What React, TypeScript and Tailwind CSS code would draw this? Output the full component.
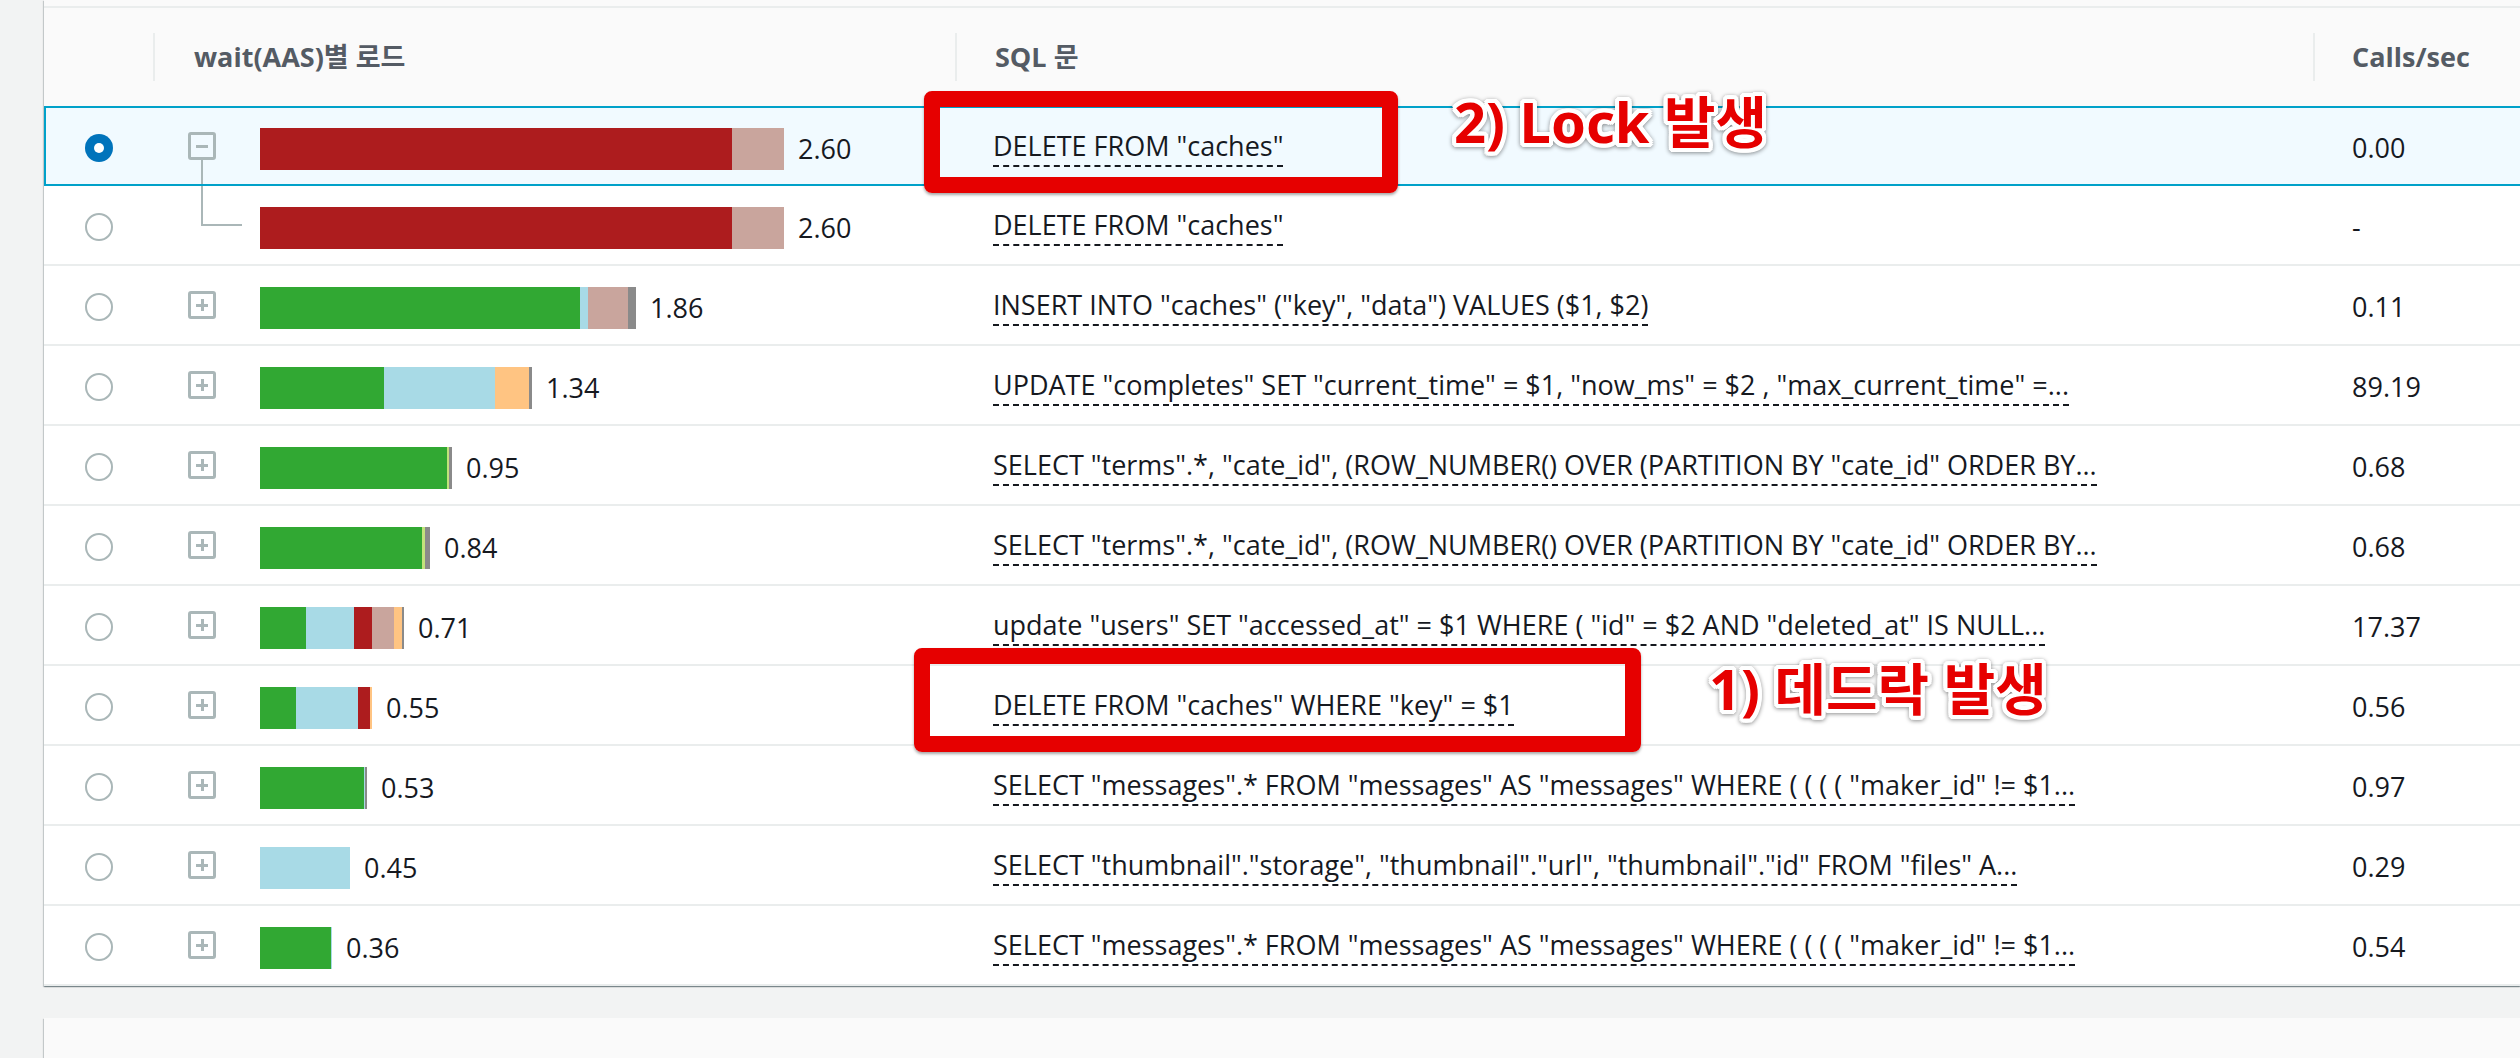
import React from "react";

const RED = "#ad1c1e";
const BROWN = "#c9a59d";
const GREEN = "#31a833";
const LBLUE = "#a8dae6";
const ORANGE = "#ffc482";
const GRAY = "#8a8a8a";
const YGREEN = "#c2e27c";

type Row = {
  sel?: boolean;
  tree: "minus" | "child" | "plus";
  segs: [number, string][];
  val: string;
  sql: string;
  calls: string;
};

const rows: Row[] = [
  { sel: true, tree: "minus", segs: [[472, RED], [52, BROWN]], val: "2.60", sql: 'DELETE FROM "caches"', calls: "0.00" },
  { tree: "child", segs: [[472, RED], [52, BROWN]], val: "2.60", sql: 'DELETE FROM "caches"', calls: "-" },
  { tree: "plus", segs: [[320, GREEN], [8, LBLUE], [40, BROWN], [8, GRAY]], val: "1.86", sql: 'INSERT INTO "caches" ("key", "data") VALUES ($1, $2)', calls: "0.11" },
  { tree: "plus", segs: [[124, GREEN], [111, LBLUE], [34, ORANGE], [3, GRAY]], val: "1.34", sql: 'UPDATE "completes" SET "current_time" = $1, "now_ms" = $2 , "max_current_time" =...', calls: "89.19" },
  { tree: "plus", segs: [[187, GREEN], [2, YGREEN], [3, GRAY]], val: "0.95", sql: 'SELECT "terms".*, "cate_id", (ROW_NUMBER() OVER (PARTITION BY "cate_id" ORDER BY...', calls: "0.68" },
  { tree: "plus", segs: [[162, GREEN], [3, YGREEN], [5, GRAY]], val: "0.84", sql: 'SELECT "terms".*, "cate_id", (ROW_NUMBER() OVER (PARTITION BY "cate_id" ORDER BY...', calls: "0.68" },
  { tree: "plus", segs: [[46, GREEN], [48, LBLUE], [18, RED], [22, BROWN], [8, ORANGE], [2, GRAY]], val: "0.71", sql: 'update "users" SET "accessed_at" = $1 WHERE ( "id" = $2 AND "deleted_at" IS NULL...', calls: "17.37" },
  { tree: "plus", segs: [[36, GREEN], [62, LBLUE], [12, RED], [2, ORANGE]], val: "0.55", sql: 'DELETE FROM "caches" WHERE "key" = $1', calls: "0.56" },
  { tree: "plus", segs: [[104, GREEN], [1, LBLUE], [2, GRAY]], val: "0.53", sql: 'SELECT "messages".* FROM "messages" AS "messages" WHERE ( ( ( ( "maker_id" != $1...', calls: "0.97" },
  { tree: "plus", segs: [[90, LBLUE]], val: "0.45", sql: 'SELECT "thumbnail"."storage", "thumbnail"."url", "thumbnail"."id" FROM "files" A...', calls: "0.29" },
  { tree: "plus", segs: [[71, GREEN], [1, LBLUE]], val: "0.36", sql: 'SELECT "messages".* FROM "messages" AS "messages" WHERE ( ( ( ( "maker_id" != $1...', calls: "0.54" },
];

function Radio({ selected }: { selected?: boolean }) {
  if (selected) {
    return (
      <span className="flex h-[28px] w-[28px] items-center justify-center rounded-full bg-[#0073bb]">
        <span className="h-[10px] w-[10px] rounded-full bg-white" />
      </span>
    );
  }
  return <span className="block h-[28px] w-[28px] rounded-full border-2 border-[#aab7b8] bg-white" />;
}

function ExpandSlot({ tree }: { tree: Row["tree"] }) {
  if (tree === "child") {
    return (
      <div className="relative h-[28px] w-[28px] shrink-0">
        <div className="absolute left-[13px] top-[-25px] h-[40px] w-[41px] border-b-2 border-l-2 border-[#aab7b8]" />
      </div>
    );
  }
  return (
    <div className="relative h-[28px] w-[28px] shrink-0">
      <div className="relative flex h-[28px] w-[28px] items-center justify-center rounded-[3px] border-[3px] border-[#aab7b8]">
        <span className="h-[3px] w-[12px] bg-[#aab7b8]" />
        {tree === "plus" && <span className="absolute h-[12px] w-[3px] bg-[#aab7b8]" />}
      </div>
      {tree === "minus" && <div className="absolute left-[13px] top-[28px] h-[24px] w-[2px] bg-[#aab7b8]" />}
    </div>
  );
}

const annotText =
  "[text-shadow:4px_0_0_#fff,-4px_0_0_#fff,0_4px_0_#fff,0_-4px_0_#fff,3px_3px_0_#fff,-3px_3px_0_#fff,3px_-3px_0_#fff,-3px_-3px_0_#fff,4px_2px_0_#fff,-4px_2px_0_#fff,4px_-2px_0_#fff,-4px_-2px_0_#fff,2px_4px_0_#fff,-2px_4px_0_#fff,2px_-4px_0_#fff,-2px_-4px_0_#fff] [filter:drop-shadow(0_1px_2px_rgba(0,0,0,0.45))]";

export default function App() {
  return (
    <div className="relative h-[1058px] w-[2520px] overflow-hidden bg-[#f2f3f3] font-['Open_Sans','Noto_Sans_CJK_KR',sans-serif] text-[#16191f]">
      <div className="ml-[44px] bg-white shadow-[0_1px_1px_0_rgba(0,28,36,0.3),1px_1px_1px_0_rgba(0,28,36,0.15),-1px_1px_1px_0_rgba(0,28,36,0.15)]">
        <div className="h-[6px] bg-[#fafafa]" />
        <div className="h-[2px] bg-[#eaeded]" />
        <div className="grid h-[98px] grid-cols-[109px_802px_1358px_1fr] bg-[#fafafa] text-[27px] font-bold text-[#545b64]">
          <div />
          <div className="flex items-center">
            <span className="h-[48px] w-[2px] bg-[#eaeded]" />
            <span className="ml-[39px]">wait(AAS)별 로드</span>
          </div>
          <div className="flex items-center">
            <span className="h-[48px] w-[2px] bg-[#eaeded]" />
            <span className="ml-[38px]">SQL 문</span>
          </div>
          <div className="flex items-center">
            <span className="h-[48px] w-[2px] bg-[#eaeded]" />
            <span className="ml-[37px]">Calls/sec</span>
          </div>
        </div>
        {rows.map((r, i) => (
          <div
            key={i}
            className={
              r.sel
                ? "grid h-[80px] grid-cols-[109px_802px_1358px_1fr] border-y-2 border-[#00a1c9] bg-[#f1faff] shadow-[inset_2px_0_0_0_#00a1c9]"
                : "grid h-[80px] grid-cols-[109px_802px_1358px_1fr] border-b-2 border-[#eaeded]"
            }
          >
            <div className="flex items-center justify-center pt-[4px]">
              <Radio selected={r.sel} />
            </div>
            <div className="flex items-center pl-[35px]">
              <ExpandSlot tree={r.tree} />
              <div className="ml-[44px] mt-[6px] flex items-center">
                <div className="flex h-[42px]">
                  {r.segs.map(([w, c], j) => (
                    <div key={j} className="h-full" style={{ width: w, backgroundColor: c }} />
                  ))}
                </div>
                <span className="ml-[14px] text-[27px] leading-[30px]">{r.val}</span>
              </div>
            </div>
            <div className="flex items-center pl-[38px] pt-[6px]">
              <span className="inline-block whitespace-nowrap border-b-2 border-dashed border-[#16191f] pb-[4px] text-[27px] leading-[30px]">
                {r.sql}
              </span>
            </div>
            <div className="flex items-center pl-[39px] pt-[4px]">
              <span className="text-[27px] leading-[30px]">{r.calls}</span>
            </div>
          </div>
        ))}
      </div>
      <div className="ml-[44px] mt-[32px] h-[60px] bg-[#fafafa] shadow-[0_1px_1px_0_rgba(0,28,36,0.3),1px_1px_1px_0_rgba(0,28,36,0.15),-1px_1px_1px_0_rgba(0,28,36,0.15)]" />

      <div className="pointer-events-none absolute left-[924px] top-[91px] h-[102px] w-[474px] rounded-[8px] border-[16px] border-[#e60000] shadow-[0_2px_3px_rgba(0,0,0,0.35)]" />
      <div className="pointer-events-none absolute left-[914px] top-[648px] h-[104px] w-[727px] rounded-[8px] border-[16px] border-[#e60000] shadow-[0_2px_3px_rgba(0,0,0,0.35)]" />

      <div
        className={`pointer-events-none absolute left-[1454px] top-[93px] whitespace-nowrap font-['Noto_Sans','Noto_Sans_CJK_KR',sans-serif] text-[56px] font-bold leading-[56px] text-[#e60000] ${annotText}`}
      >
        2) Lock 발생
      </div>
      <div
        className={`pointer-events-none absolute left-[1709px] top-[660px] whitespace-nowrap font-['Noto_Sans','Noto_Sans_CJK_KR',sans-serif] text-[56px] font-bold leading-[56px] text-[#e60000] ${annotText}`}
      >
        1) 데드락 발생
      </div>
    </div>
  );
}
